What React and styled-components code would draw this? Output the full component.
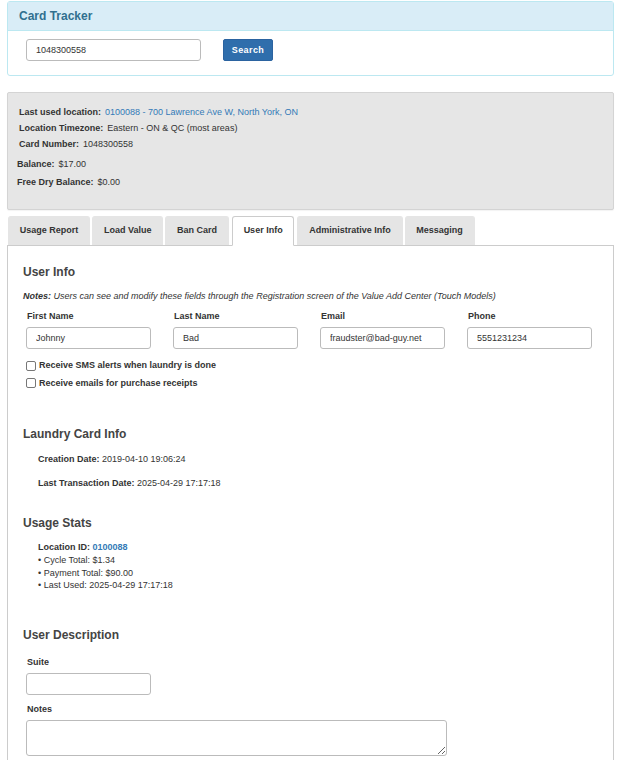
import React from 'react'
import styled, { createGlobalStyle } from 'styled-components'

const GlobalStyle = createGlobalStyle`
  body {
    margin: 0;
    padding: 1px 11px 0 7px;
    font-family: 'Liberation Sans', Arial, sans-serif;
    font-size: 9px;
    line-height: 11.5px;
    color: #333;
    background: #fff;
  }
  * { box-sizing: border-box; }
`

const InfoPanel = styled.div`
  border: 1px solid #bce8f1;
  border-radius: 3px;
  margin-bottom: 16px;
`

const PanelHeading = styled.div`
  background: #d9edf7;
  border-bottom: 1px solid #bce8f1;
  height: 29px;
  padding: 1px 11px 0;
  display: flex;
  align-items: center;
  h3 {
    margin: 0;
    font-size: 12px;
    font-weight: bold;
    color: #31708f;
  }
`

const SearchRow = styled.div`
  display: flex;
  align-items: center;
  gap: 22px;
  padding: 8px 18px 14px;
`

const TextInput = styled.input`
  width: ${p => p.$w || 125}px;
  height: 22px;
  border: 1px solid #bbb;
  border-radius: 3px;
  padding: 0 9px;
  font-family: inherit;
  font-size: 9px;
  color: #333;
  background: #fff;
  outline: none;
`

const SearchButton = styled.button`
  height: 22px;
  width: 50px;
  background: #2f6eac;
  border: 1px solid #2b63a0;
  border-radius: 2px;
  color: #fff;
  font-family: inherit;
  font-weight: bold;
  font-size: 9px;
  letter-spacing: 0.4px;
  padding: 0;
`

const SummaryWell = styled.div`
  background: #e6e6e6;
  border: 1px solid #d4d4d4;
  border-radius: 2px;
  box-shadow: 0 1px 1px rgba(0, 0, 0, 0.05);
  padding: 11px 9px 19px;
  min-height: 114px;
  margin-bottom: 6px;
`

const SummaryLine = styled.div`
  display: flex;
  gap: 4px;
  line-height: 16px;
  padding-left: ${p => (p.$indent ? 2 : 0)}px;
  margin-top: ${p => p.$gap || 0}px;
  b { color: #333; }
  a { color: #337ab7; text-decoration: none; }
`

const Tabs = styled.div`
  display: flex;
  gap: 2px;
  padding-left: 1px;
  border-bottom: 1px solid #ccc;
  height: 30px;
  align-items: flex-end;
`

const Tab = styled.div`
  height: ${p => (p.$active ? 30 : 29)}px;
  padding: 0 10.8px;
  display: flex;
  align-items: center;
  font-weight: bold;
  color: #333;
  background: ${p => (p.$active ? '#fff' : '#e5e5e5')};
  border: 1px solid ${p => (p.$active ? '#ccc' : '#e5e5e5')};
  border-bottom: ${p => (p.$active ? '1px solid #fff' : 'none')};
  border-radius: 3px 3px 0 0;
  margin-bottom: ${p => (p.$active ? -1 : 0)}px;
  margin-left: ${p => p.$ml || 0}px;
`

const TabBody = styled.div`
  border: 1px solid #ccc;
  border-top: none;
  padding: 18px 15px 40px;
  min-height: 600px;
`

const SectionTitle = styled.h4`
  margin: ${p => p.$mt || 0}px 0 0;
  font-size: 12px;
  font-weight: bold;
  color: #444;
  line-height: 16px;
`

const Note = styled.p`
  margin: 11px 0 0;
  font-size: 9px;
  font-style: italic;
  color: #333;
`

const FieldGrid = styled.div`
  display: flex;
  gap: 22px;
  padding-left: 3px;
  margin-top: 8px;
`

const Field = styled.div`
  display: flex;
  flex-direction: column;
  gap: 5px;
  label {
    font-weight: bold;
    padding-left: 1px;
  }
`

const CheckRow = styled.label`
  display: flex;
  align-items: center;
  gap: 3px;
  font-weight: bold;
  margin-top: ${p => p.$mt || 0}px;
  padding-left: 3px;
  span.box {
    width: 10px;
    height: 10px;
    border: 1px solid #777;
    border-radius: 2px;
    background: #fff;
  }
`

const DetailLine = styled.div`
  padding-left: 15px;
  margin-top: ${p => p.$mt || 0}px;
  line-height: 13px;
`

const StatList = styled.ul`
  list-style: none;
  margin: 0;
  padding: 0 0 0 15px;
  line-height: 12.5px;
  li::before { content: '\\2022\\00a0'; }
`

const StatHead = styled.div`
  padding-left: 15px;
  margin-top: 10px;
  font-weight: bold;
  line-height: 13px;
  a { color: #337ab7; text-decoration: none; }
`

const DescField = styled(Field)`
  padding-left: 3px;
  margin-top: ${p => p.$mt || 0}px;
`

const NotesArea = styled.textarea`
  width: 421px;
  height: 36px;
  margin-top: -1px;
  border: 1px solid #bbb;
  border-radius: 3px;
  font-family: inherit;
  outline: none;
  display: block;
`

const tabs = [
  { label: 'Usage Report' },
  { label: 'Load Value' },
  { label: 'Ban Card' },
  { label: 'User Info', active: true, ml: 1 },
  { label: 'Administrative Info', ml: 1 },
  { label: 'Messaging' },
]

export default function App() {
  return (
    <>
      <GlobalStyle />
      <InfoPanel>
        <PanelHeading><h3>Card Tracker</h3></PanelHeading>
        <SearchRow>
          <TextInput $w={175} defaultValue="1048300558" />
          <SearchButton>Search</SearchButton>
        </SearchRow>
      </InfoPanel>

      <SummaryWell>
        <SummaryLine $indent>
          <b>Last used location:</b>
          <a href="#">0100088 - 700 Lawrence Ave W, North York, ON</a>
        </SummaryLine>
        <SummaryLine $indent><b>Location Timezone:</b> Eastern - ON &amp; QC (most areas)</SummaryLine>
        <SummaryLine $indent><b>Card Number:</b> 1048300558</SummaryLine>
        <SummaryLine $gap={4}><b>Balance:</b> $17.00</SummaryLine>
        <SummaryLine $gap={2}><b>Free Dry Balance:</b> $0.00</SummaryLine>
      </SummaryWell>

      <Tabs>
        {tabs.map(t => (
          <Tab key={t.label} $active={t.active} $ml={t.ml}>{t.label}</Tab>
        ))}
      </Tabs>

      <TabBody>
        <SectionTitle>User Info</SectionTitle>
        <Note><b>Notes:</b> Users can see and modify these fields through the Registration screen of the Value Add Center (Touch Models)</Note>
        <FieldGrid>
          <Field><label>First Name</label><TextInput defaultValue="Johnny" /></Field>
          <Field><label>Last Name</label><TextInput defaultValue="Bad" /></Field>
          <Field><label>Email</label><TextInput defaultValue="fraudster@bad-guy.net" /></Field>
          <Field><label>Phone</label><TextInput defaultValue="5551231234" /></Field>
        </FieldGrid>
        <CheckRow $mt={11}><span className="box" />Receive SMS alerts when laundry is done</CheckRow>
        <CheckRow $mt={6}><span className="box" />Receive emails for purchase receipts</CheckRow>

        <SectionTitle $mt={37}>Laundry Card Info</SectionTitle>
        <DetailLine $mt={11}><b>Creation Date:</b> 2019-04-10 19:06:24</DetailLine>
        <DetailLine $mt={11}><b>Last Transaction Date:</b> 2025-04-29 17:17:18</DetailLine>

        <SectionTitle $mt={25}>Usage Stats</SectionTitle>
        <StatHead>Location ID: <a href="#">0100088</a></StatHead>
        <StatList>
          <li>Cycle Total: $1.34</li>
          <li>Payment Total: $90.00</li>
          <li>Last Used: 2025-04-29 17:17:18</li>
        </StatList>

        <SectionTitle $mt={35}>User Description</SectionTitle>
        <DescField $mt={14}><label>Suite</label><TextInput /></DescField>
        <DescField $mt={9}><label>Notes</label><NotesArea /></DescField>
      </TabBody>
    </>
  )
}
